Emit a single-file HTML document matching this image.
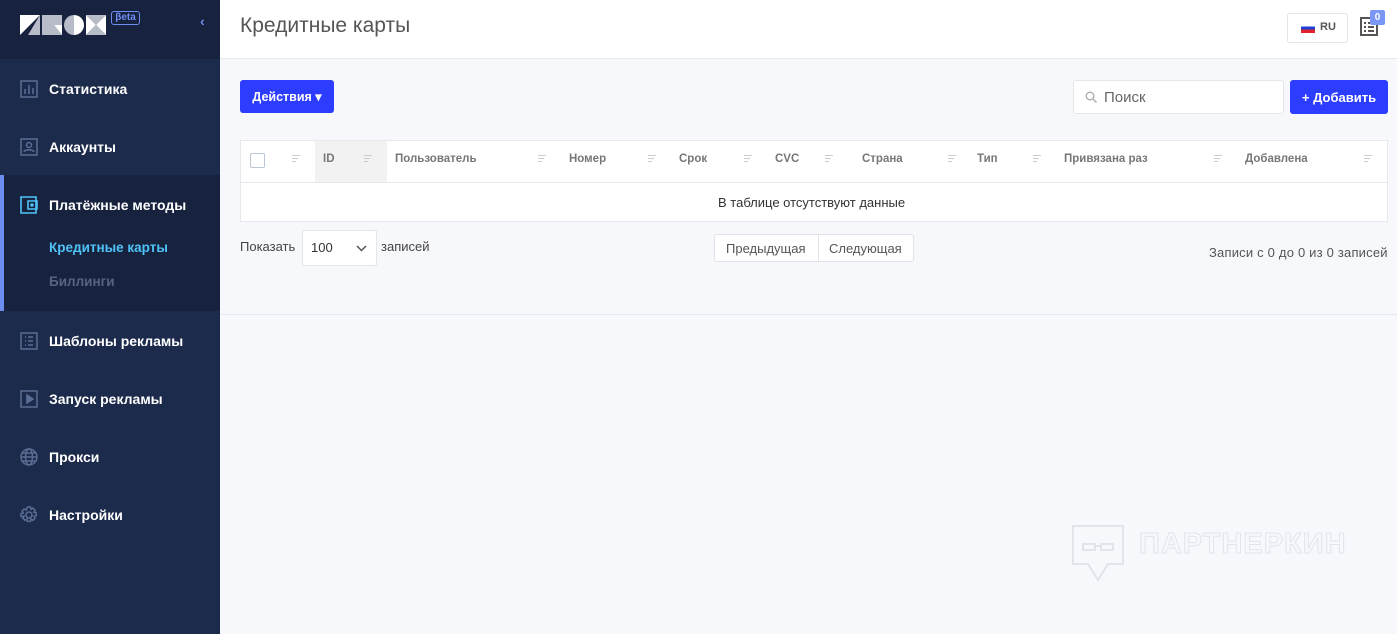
<!DOCTYPE html>
<html><head><meta charset="utf-8"><style>
*{margin:0;padding:0;box-sizing:border-box}
body{width:1397px;height:634px;overflow:hidden;background:#f7f8fc;font-family:"Liberation Sans",sans-serif;position:relative}
.a{position:absolute}
#sb{left:0;top:0;width:220px;height:634px;background:#1c2a4b}
.nav{position:absolute;left:0;width:220px;color:#fff;font-weight:bold;font-size:14px}
.nav svg{position:absolute;left:20px}
.nav span{position:absolute;left:49px}
.th{position:absolute;top:153px;font-size:11.5px;font-weight:bold;color:#777}
.si{position:absolute;top:155px;width:9px;height:8px}
.si i{display:block;height:1px;background:#ccc;margin-bottom:2px}
</style></head><body>
<div id="sb" class="a">
  <div class="a" style="left:0;top:0;width:220px;height:59px;background:#17223f"></div>
  <svg class="a" style="left:20px;top:15px" width="87" height="20" viewBox="0 0 87 20">
    <polygon points="0,0 20,0 0,20" fill="#fff"/><polygon points="20,0 20,20 8,20" fill="#b8bcc8"/>
    <rect x="22" y="0" width="20" height="10" fill="#b8bcc8"/><polygon points="22,10 34,10 42,20 22,20" fill="#b8bcc8"/><polygon points="34,10 42,10 42,20" fill="#fff"/>
    <path d="M54 0 A10 10 0 0 0 54 20Z" fill="#b8bcc8"/><path d="M54 0 A10 10 0 0 1 54 20Z" fill="#fff"/>
    <polygon points="66,0 86,0 76,10" fill="#b8bcc8"/><polygon points="66,0 76,10 66,20" fill="#fff"/><polygon points="66,20 76,10 86,20" fill="#b8bcc8"/><polygon points="86,0 76,10 86,20" fill="#fff"/>
  </svg>
  <div class="a" style="left:111px;top:11px;width:29px;height:14px;border:1px solid #6d8df0;border-radius:3px;color:#6d8df0;font-size:10px;font-weight:bold;text-align:center;line-height:12px">βeta</div>
  <div class="a" style="left:200px;top:13px;color:#6d8df0;font-size:14px;font-weight:bold">‹</div>
  <div class="a" style="left:0;top:175px;width:220px;height:136px;background:#17223f"></div>
  <div class="a" style="left:0;top:175px;width:4px;height:136px;background:#6d8df0"></div>
  <div class="nav" style="top:80px"><svg width="18" height="18" viewBox="0 0 18 18" fill="none" stroke="#5a6d93" stroke-width="1.5"><rect x="1" y="1" width="16" height="16"/><path d="M5 14V9M9 14V5M13 14V8"/></svg><span style="top:1px">Статистика</span></div>
  <div class="nav" style="top:138px"><svg width="18" height="18" viewBox="0 0 18 18" fill="none" stroke="#5a6d93" stroke-width="1.5"><rect x="1" y="1" width="16" height="16"/><circle cx="9" cy="7" r="2.5"/><path d="M4 14c1-3 9-3 10 0"/></svg><span style="top:1px">Аккаунты</span></div>
  <div class="nav" style="top:196px"><svg width="18" height="18" viewBox="0 0 18 18" fill="none" stroke="#4fc3f7" stroke-width="1.6"><path d="M1 1h15v16H1z"/><path d="M8 5h9v8H8z"/><circle cx="12" cy="9" r="1" fill="#4fc3f7"/></svg><span style="top:1px">Платёжные методы</span></div>
  <div class="a" style="left:49px;top:240px;color:#4fc3f7;font-size:13.5px;font-weight:bold">Кредитные карты</div>
  <div class="a" style="left:49px;top:274px;color:#55647f;font-size:13.5px;font-weight:bold">Биллинги</div>
  <div class="nav" style="top:332px"><svg width="18" height="18" viewBox="0 0 18 18" fill="none" stroke="#5a6d93" stroke-width="1.5"><rect x="1" y="1" width="16" height="16"/><path d="M5 5h1M5 9h1M5 13h1M8 5h5M8 9h5M8 13h5"/></svg><span style="top:1px">Шаблоны рекламы</span></div>
  <div class="nav" style="top:390px"><svg width="18" height="18" viewBox="0 0 18 18" fill="none" stroke="#5a6d93" stroke-width="1.5"><rect x="1" y="1" width="16" height="16"/><path d="M7 5v8l6-4z" fill="#5a6d93"/></svg><span style="top:1px">Запуск рекламы</span></div>
  <div class="nav" style="top:448px"><svg width="18" height="18" viewBox="0 0 18 18" fill="none" stroke="#5a6d93" stroke-width="1.5"><circle cx="9" cy="9" r="8"/><ellipse cx="9" cy="9" rx="3.5" ry="8"/><path d="M1 9h16M2.5 5h13M2.5 13h13"/></svg><span style="top:1px">Прокси</span></div>
  <div class="nav" style="top:506px"><svg width="18" height="18" viewBox="0 0 18 18" fill="none" stroke="#5a6d93" stroke-width="1.5"><circle cx="9" cy="9" r="3"/><path d="M7.5 1h3l.5 2.3 2-1.2 2.1 2.1-1.2 2 2.3.5v3l-2.3.5 1.2 2-2.1 2.1-2-1.2-.5 2.3h-3l-.5-2.3-2 1.2-2.1-2.1 1.2-2L1 10.5v-3l2.3-.5-1.2-2 2.1-2.1 2 1.2z"/></svg><span style="top:1px">Настройки</span></div>
</div>
<div class="a" style="left:220px;top:0;width:1177px;height:59px;background:#fff;border-bottom:1px solid #e6e8ee"></div>
<div class="a" style="left:240px;top:14px;font-size:21px;color:#555">Кредитные карты</div>
<div class="a" style="left:1287px;top:13px;width:61px;height:30px;background:#fff;border:1px solid #e4e6ea;border-radius:3px"></div>
<div class="a" style="left:1301px;top:23px;width:14px;height:10px;background:linear-gradient(#fff 0 33%,#1f3fd8 33% 66%,#e0242c 66%)"></div>
<div class="a" style="left:1320px;top:21px;font-size:11px;font-weight:bold;color:#555">RU</div>
<svg class="a" style="left:1360px;top:17px" width="18" height="19" viewBox="0 0 18 19" fill="none" stroke="#555" stroke-width="2"><rect x="1" y="1" width="16" height="17"/><path d="M4 6h2M8 6h6M4 10h2M8 10h6M4 14h2M8 14h6"/></svg>
<div class="a" style="left:1370px;top:10px;width:15px;height:15px;background:#7b97f5;color:#fff;font-size:10px;font-weight:bold;text-align:center;line-height:15px;border-radius:2px">0</div>
<div class="a" style="left:240px;top:80px;width:94px;height:33px;background:#2c3dff;border-radius:3px;color:#fff;font-size:12.5px;font-weight:bold;line-height:34px;text-align:center">Действия ▾</div>
<div class="a" style="left:1073px;top:80px;width:211px;height:34px;background:#fff;border:1px solid #e4e6ea;border-radius:3px"></div>
<svg class="a" style="left:1085px;top:91px" width="12" height="12" viewBox="0 0 12 12" fill="none" stroke="#aaa" stroke-width="1.3"><circle cx="5" cy="5" r="3.8"/><path d="M8 8l3.5 3.5"/></svg>
<div class="a" style="left:1104px;top:89px;font-size:15px;color:#666">Поиск</div>
<div class="a" style="left:1290px;top:80px;width:98px;height:34px;background:#2c3dff;border-radius:3px;color:#fff;font-size:13px;font-weight:bold;line-height:35px;text-align:center">+ Добавить</div>
<div class="a" style="left:240px;top:140px;width:1148px;height:82px;background:#fff;border:1px solid #e6e8ee"></div>
<div class="a" style="left:315px;top:141px;width:72px;height:41px;background:#f2f2f2"></div>
<div class="a" style="left:241px;top:182px;width:1146px;height:1px;background:#e6e8ee"></div>
<div class="a" style="left:250px;top:153px;width:15px;height:15px;border:1.5px solid #bcc6d6;border-radius:2px"></div>
<div class="th" style="left:323px">ID</div><div class="th" style="left:395px">Пользователь</div><div class="th" style="left:569px">Номер</div><div class="th" style="left:679px">Срок</div><div class="th" style="left:775px">CVC</div><div class="th" style="left:862px">Страна</div><div class="th" style="left:977px">Тип</div><div class="th" style="left:1064px">Привязана раз</div><div class="th" style="left:1245px">Добавлена</div>
<div class="si" style="left:292px"><i style="width:8px"></i><i style="width:6px"></i><i style="width:4px"></i></div>
<div class="si" style="left:364px"><i style="width:8px"></i><i style="width:6px"></i><i style="width:4px"></i></div>
<div class="si" style="left:538px"><i style="width:8px"></i><i style="width:6px"></i><i style="width:4px"></i></div>
<div class="si" style="left:648px"><i style="width:8px"></i><i style="width:6px"></i><i style="width:4px"></i></div>
<div class="si" style="left:744px"><i style="width:8px"></i><i style="width:6px"></i><i style="width:4px"></i></div>
<div class="si" style="left:825px"><i style="width:8px"></i><i style="width:6px"></i><i style="width:4px"></i></div>
<div class="si" style="left:948px"><i style="width:8px"></i><i style="width:6px"></i><i style="width:4px"></i></div>
<div class="si" style="left:1033px"><i style="width:8px"></i><i style="width:6px"></i><i style="width:4px"></i></div>
<div class="si" style="left:1214px"><i style="width:8px"></i><i style="width:6px"></i><i style="width:4px"></i></div>
<div class="si" style="left:1364px"><i style="width:8px"></i><i style="width:6px"></i><i style="width:4px"></i></div>
<div class="a" style="left:718px;top:195px;font-size:13px;color:#333">В таблице отсутствуют данные</div>
<div class="a" style="left:240px;top:239px;font-size:13px;color:#444">Показать</div>
<div class="a" style="left:302px;top:230px;width:75px;height:36px;background:#fff;border:1px solid #e4e6ea;border-radius:2px"></div>
<div class="a" style="left:311px;top:240px;font-size:13px;color:#333">100</div>
<svg class="a" style="left:356px;top:245px" width="11" height="7" viewBox="0 0 11 7" fill="none" stroke="#555" stroke-width="1.5"><path d="M1 1l4.5 4.5L10 1"/></svg>
<div class="a" style="left:381px;top:239px;font-size:13px;color:#444">записей</div>
<div class="a" style="left:714px;top:234px;width:200px;height:28px;background:#fff;border:1px solid #e0e2e6;border-radius:3px"></div>
<div class="a" style="left:818px;top:235px;width:1px;height:26px;background:#e0e2e6"></div>
<div class="a" style="left:726px;top:241px;font-size:13px;color:#555">Предыдущая</div>
<div class="a" style="left:829px;top:241px;font-size:13px;color:#555">Следующая</div>
<div class="a" style="left:1209px;top:245px;font-size:13px;color:#555;letter-spacing:0.2px">Записи с 0 до 0 из 0 записей</div>
<div class="a" style="left:220px;top:314px;width:1177px;height:1px;background:#e6e8ee"></div>
<svg class="a" style="left:1070px;top:523px" width="56" height="60" viewBox="0 0 56 60" fill="none" stroke="#e2e4ea" stroke-width="2"><path d="M3 3h50v38H38l-10 16-10-16H3z"/><path d="M13 21h12v6H13zM31 21h12v6H31zM25 23h6"/></svg>
<div class="a" style="left:1139px;top:528px;font-size:29px;font-weight:bold;color:transparent;-webkit-text-stroke:1px #e2e4ea;letter-spacing:1px">ПАРТНЕРКИН</div>
</body></html>
